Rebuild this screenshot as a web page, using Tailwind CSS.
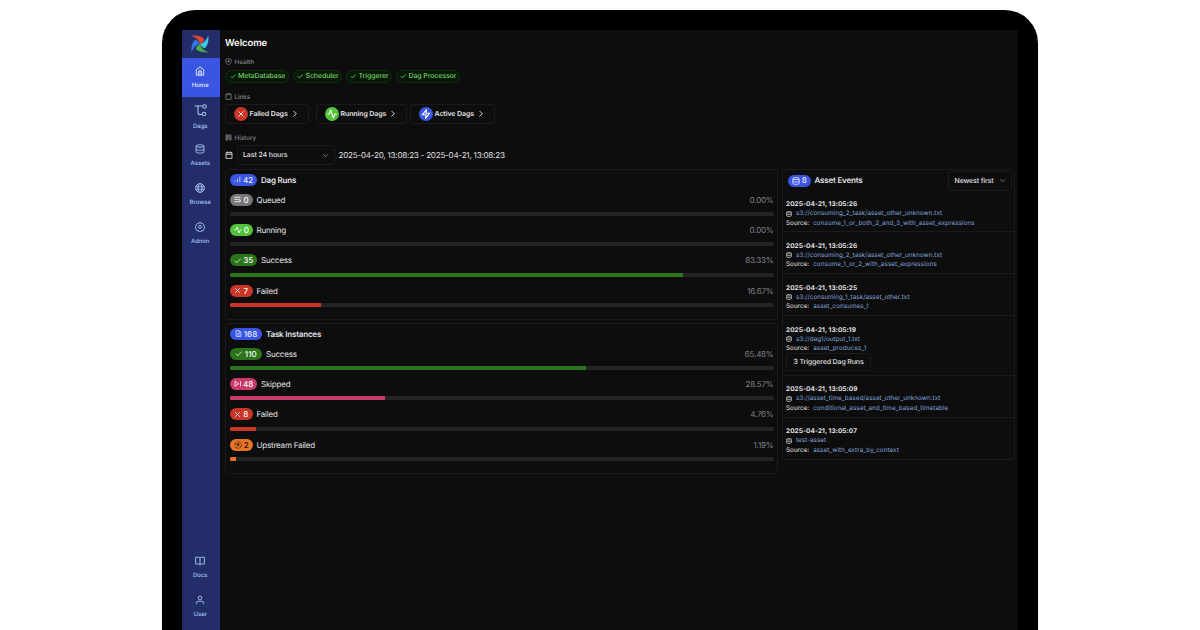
<!DOCTYPE html>
<html lang="en">
<head>
<meta charset="utf-8">
<title>Airflow</title>
<script src="https://cdn.jsdelivr.net/npm/@tailwindcss/browser@4"></script>
</head>
<body class="bg-white w-[1200px] h-[630px] overflow-hidden font-['Inter',sans-serif] [text-rendering:geometricPrecision]">
<svg class="hidden" xmlns="http://www.w3.org/2000/svg">
  <symbol id="check" viewBox="0 0 24 24"><path d="M22 5 9 18l-6-6"/></symbol>
  <symbol id="x" viewBox="0 0 24 24"><path d="M20 4 4 20M4 4l16 16"/></symbol>
  <symbol id="right" viewBox="0 0 24 24"><path d="m8 3 9 9-9 9"/></symbol>
  <symbol id="down" viewBox="0 0 24 24"><path d="m4 8 8 8 8-8"/></symbol>
  <symbol id="pulse" viewBox="0 0 24 24"><path d="M23 12h-4l-4 9L9 3l-4 9H1"/></symbol>
  <symbol id="zap" viewBox="0 0 24 24"><path d="M13 2 3 14h9l-1 8 10-12h-9z"/></symbol>
  <symbol id="db" viewBox="0 0 24 24"><ellipse cx="12" cy="5" rx="9.500" ry="3"/><path d="M2.500 5v14c0 1.700 4 3 9.500 3s9.500-1.300 9.500-3V5M2.500 12c0 1.700 4 3 9.500 3s9.500-1.300 9.500-3"/></symbol>
  <symbol id="bars" viewBox="0 0 24 24"><path d="M20 21V2M12 21V9M4 21v-5"/></symbol>
  <symbol id="queue" viewBox="0 0 24 24"><path d="M1 4h20M1 11h12M1 18h12M16 10v10l7-5z"/></symbol>
  <symbol id="file" viewBox="0 0 24 24"><path d="M14 2H4v20h16V8zM14 2v6h6M8 13h8M8 17h8"/></symbol>
  <symbol id="skip" viewBox="0 0 24 24"><path d="M3 4v16l12-8zM21 4v16"/></symbol>
  <symbol id="up" viewBox="0 0 24 24"><circle cx="12" cy="12" r="10" stroke-dasharray="11 4"/><path d="M12 18V7M8 11l4-4 4 4z"/></symbol>
  <symbol id="clip" viewBox="0 0 24 24"><path d="M8 4H3v18h18V4h-5M8 2h8v4H8z"/></symbol>
  <symbol id="shield" viewBox="0 0 24 24"><path d="M12 2 3 5v8c0 5 4 8 9 10 5-2 9-5 9-10V5z"/><path d="M12 7v9M7.500 11.500h9"/></symbol>
  <symbol id="hist" viewBox="0 0 24 24"><path d="M3 3h10v6H3zM3 13h7v8H3zM16 3h5v18h-5zM12 13h9M7 3v18"/></symbol>
  <symbol id="cal" viewBox="0 0 24 24"><path d="M3 5h18v17H3zM3 10h18M8 1v6M16 1v6"/></symbol>
</svg>

<div class="ml-[162px] mt-[10px] w-[876px] h-[620px] bg-black rounded-t-[33px] px-5 pt-5">
<div class="flex w-[836px] h-[600px] bg-[#0d0d0d] overflow-hidden text-[#e4e4e7]">

  <nav class="flex flex-col shrink-0 w-[37.500px] h-[600px] pr-[1px] bg-[#222d69] text-[#a6c3f5] text-[6px] leading-[8px] font-medium">
    <div class="h-7 flex items-center justify-center">
      <svg class="size-[18px]" viewBox="0 0 54 54">
        <path fill="#e4452c" d="M1 2C16 0 33 4 38 11c3 5 0 9-11 16C25 16 15 7 1 2z"/>
        <path fill="#44c4dc" d="M52 1C54 16 50 33 43 38c-5 3-9 0-16-11C38 25 47 15 52 1z"/>
        <path fill="#42b047" d="M53 52C38 54 21 50 16 43c-3-5 0-9 11-16 2 11 12 20 26 25z"/>
        <path fill="#3474e8" d="M1 53C0 38 4 21 11 16c5-3 9 0 16 11C16 29 6 39 1 53z"/>
      </svg>
    </div>
    <div class="h-[39px] -mr-[1px] pr-[1px] bg-[#3b55e3] text-[#e5ebff] flex flex-col items-center pt-2">
      <svg class="size-[10px]" viewBox="0 0 24 24" fill="none" stroke="currentColor" stroke-width="2.200"><path d="m3 9 9-7 9 7v13H3zM8 22v-7a4 4 0 0 1 8 0v7M12 12v10"/></svg>
      <span class="mt-[5.500px]">Home</span>
    </div>
    <div class="h-[41px] flex flex-col items-center pt-[7px]">
      <svg class="size-[13px]" viewBox="0 0 26 26" fill="none" stroke="currentColor" stroke-width="2.200"><path d="M1 4h17M8 4v13q0 4 4 4h4"/><circle cx="21" cy="5" r="3.500"/><circle cx="20" cy="20" r="3.500"/></svg>
      <span class="mt-[5.500px]">Dags</span>
    </div>
    <div class="h-[39px] flex flex-col items-center pt-[6px]">
      <svg class="size-[10px]" fill="none" stroke="currentColor" stroke-width="2.200"><use href="#db"/></svg>
      <span class="mt-[5.500px]">Assets</span>
    </div>
    <div class="h-[39px] flex flex-col items-center pt-[6px]">
      <svg class="size-[10px]" viewBox="0 0 24 24" fill="none" stroke="currentColor" stroke-width="2.200"><circle cx="12" cy="12" r="10.500"/><ellipse cx="12" cy="12" rx="4.800" ry="10.500"/><path d="M2 9h20M2 15h20"/></svg>
      <span class="mt-[5.500px]">Browse</span>
    </div>
    <div class="h-[39px] flex flex-col items-center pt-[6px]">
      <svg class="size-[10px]" viewBox="0 0 24 24" fill="none" stroke="currentColor" stroke-width="2.200"><path d="m9.500 1.500h5l1 3 3-1 3 3-1 3 2.500 1v4l-2.500 1 1 3-3 3-3-1-1 3h-5l-1-3-3 1-3-3 1-3-2.500-1v-4l2.500-1-1-3 3-3 3 1z"/><circle cx="12" cy="12" r="3.500"/></svg>
      <span class="mt-[5.500px]">Admin</span>
    </div>
    <div class="grow"></div>
    <div class="h-[39px] flex flex-col items-center">
      <svg class="size-[10px]" viewBox="0 0 24 24" fill="none" stroke="currentColor" stroke-width="2.200"><path d="M1.500 3H9q3 0 3 3 0-3 3-3h7.500v16H15q-3 0-3 3 0-3-3-3H1.500zM12 6v15"/></svg>
      <span class="mt-[5.500px]">Docs</span>
    </div>
    <div class="h-[35px] flex flex-col items-center">
      <svg class="size-[10px]" viewBox="0 0 24 24" fill="none" stroke="currentColor" stroke-width="2.200"><circle cx="12" cy="7" r="4.500"/><path d="M3 22v-2q0-5 5-5h8q5 0 5 5v2"/></svg>
      <span class="mt-[5.500px]">User</span>
    </div>
  </nav>

  <main class="grow pl-[5.500px] pr-[4px] pt-[8px] tracking-[-0.100px]">
    <h1 class="text-[9.500px] leading-[12px] font-semibold text-[#fafafa]">Welcome</h1>
    <div class="mt-[7px] h-[10px] pt-px flex items-center gap-[2.500px] text-[6.250px] font-medium tracking-normal text-[#85858c]">
      <svg class="size-[7px] mb-[2px]" fill="none" stroke="currentColor" stroke-width="2.500"><use href="#shield"/></svg>Health
    </div>
    <div class="mt-[2.500px] flex gap-[4px] text-[7px] font-medium text-[#75d067]">
      <div class="w-[64px] h-[13.500px] flex items-center gap-[2px] pl-[3.500px] rounded-full border border-[#103010] bg-[#081807]"><svg class="size-[6.500px]" fill="none" stroke="currentColor" stroke-width="3"><use href="#check"/></svg>MetaDatabase</div>
      <div class="w-[49px] h-[13.500px] flex items-center gap-[2px] pl-[3px] rounded-full border border-[#103010] bg-[#081807]"><svg class="size-[6.500px]" fill="none" stroke="currentColor" stroke-width="3"><use href="#check"/></svg>Scheduler</div>
      <div class="w-[46px] h-[13.500px] flex items-center gap-[2px] pl-[3px] rounded-full border border-[#103010] bg-[#081807]"><svg class="size-[6.500px]" fill="none" stroke="currentColor" stroke-width="3"><use href="#check"/></svg>Triggerer</div>
      <div class="w-[64px] h-[13.500px] flex items-center gap-[2px] pl-[3px] rounded-full border border-[#103010] bg-[#081807]"><svg class="size-[6.500px]" fill="none" stroke="currentColor" stroke-width="3"><use href="#check"/></svg>Dag Processor</div>
    </div>
    <div class="mt-[9px] h-[10px] pt-px flex items-center gap-[2.500px] text-[6.250px] font-medium tracking-normal text-[#85858c]">
      <svg class="size-[7px] mb-[2px]" fill="none" stroke="currentColor" stroke-width="2.500"><use href="#clip"/></svg>Links
    </div>
    <div class="mt-[2px] flex gap-[7px] text-[7px] font-semibold">
      <div class="w-[84px] h-5 flex items-center gap-[2px] pl-[7.500px] rounded-[2.500px] border border-[#1b1b1d]"><span class="size-[14px] rounded-full bg-[#c93627] text-white flex items-center justify-center"><svg class="size-[8px]" fill="none" stroke="currentColor" stroke-width="2.500"><use href="#x"/></svg></span>Failed Dags<svg class="size-[7.500px] ml-[1px]" fill="none" stroke="currentColor" stroke-width="3"><use href="#right"/></svg></div>
      <div class="w-[91px] h-5 flex items-center gap-[2px] pl-[7.500px] rounded-[2.500px] border border-[#1b1b1d]"><span class="size-[14px] rounded-full bg-[#52c33a] text-white flex items-center justify-center"><svg class="size-[10px]" fill="none" stroke="currentColor" stroke-width="2.500"><use href="#pulse"/></svg></span>Running Dags<svg class="size-[7.500px] ml-[1px]" fill="none" stroke="currentColor" stroke-width="3"><use href="#right"/></svg></div>
      <div class="w-[85px] -ml-[4px] h-5 flex items-center gap-[2px] pl-[7.500px] rounded-[2.500px] border border-[#1b1b1d]"><span class="size-[14px] rounded-full bg-[#3b55e3] text-white flex items-center justify-center"><svg class="size-[10px]" fill="none" stroke="currentColor" stroke-width="2.500"><use href="#zap"/></svg></span>Active Dags<svg class="size-[7.500px] ml-[1px]" fill="none" stroke="currentColor" stroke-width="3"><use href="#right"/></svg></div>
    </div>
    <div class="mt-[9px] h-[10px] pt-px flex items-center gap-[2.500px] text-[6.250px] font-medium tracking-normal text-[#85858c]">
      <svg class="size-[7px] mb-[2px]" fill="none" stroke="currentColor" stroke-width="2.500"><use href="#hist"/></svg>History
    </div>
    <div class="mt-[2px] h-5 flex items-center">
      <svg class="size-[8px]" fill="none" stroke="currentColor" stroke-width="2.500"><use href="#cal"/></svg>
      <div class="ml-[3.500px] w-[98px] h-5 flex items-center justify-between pl-[5.500px] pr-[5px] rounded-[2.500px] border border-[#1b1b1d] text-[7px] font-medium">Last 24 hours<svg class="size-[7px] text-[#a1a1aa]" fill="none" stroke="currentColor" stroke-width="2.500"><use href="#down"/></svg></div>
      <span class="ml-[4px] text-[8px] tracking-[-0.190px]">2025-04-20, 13:08:23 - 2025-04-21, 13:08:23</span>
    </div>

    <div class="mt-[3.500px] flex gap-[4px] items-start">
      <div class="w-[553px] flex flex-col gap-[3px] tracking-[-0.200px]">
        <section class="h-[151px] border border-[#1b1b1d] rounded-[2.500px] pl-[4px] pr-[3.500px] pt-[4px] text-[8px]">
          <div class="h-[12px] flex items-center gap-[4px] font-semibold"><span class="h-[12px] w-[27px] rounded-full bg-[#3b55e3] text-[#e5ebff] font-medium tracking-normal flex items-center justify-center gap-[2px]"><svg class="size-[7px]" fill="none" stroke="currentColor" stroke-width="2.500"><use href="#bars"/></svg>42</span>Dag Runs</div>
          <div class="mt-[8px] h-[30.300px]"><div class="h-[12.500px] flex items-center"><span class="h-[12px] w-[22.500px] rounded-full bg-[#77777a] text-white font-medium tracking-normal flex items-center justify-center gap-[2px] mr-[4px]"><svg class="size-[7.500px]" fill="none" stroke="currentColor" stroke-width="2.500"><use href="#queue"/></svg>0</span>Queued<span class="ml-auto text-[#85858c]">0.00%</span></div><div class="mt-[6px] h-[4px] rounded-[1.500px] bg-[#242426] overflow-hidden"></div></div>
          <div class="h-[30.300px]"><div class="h-[12.500px] flex items-center"><span class="h-[12px] w-[22.500px] rounded-full bg-[#52c33a] text-white font-medium tracking-normal flex items-center justify-center gap-[2px] mr-[4px]"><svg class="size-[8px]" fill="none" stroke="currentColor" stroke-width="2.500"><use href="#pulse"/></svg>0</span>Running<span class="ml-auto text-[#85858c]">0.00%</span></div><div class="mt-[6px] h-[4px] rounded-[1.500px] bg-[#242426] overflow-hidden"></div></div>
          <div class="h-[30.300px]"><div class="h-[12.500px] flex items-center"><span class="h-[12px] w-[27px] rounded-full bg-[#2a7519] text-white font-medium tracking-normal flex items-center justify-center gap-[2px] mr-[4px]"><svg class="size-[7.500px]" fill="none" stroke="currentColor" stroke-width="2.500"><use href="#check"/></svg>35</span>Success<span class="ml-auto text-[#85858c]">83.33%</span></div><div class="mt-[6px] h-[4px] rounded-[1.500px] bg-[#242426] overflow-hidden"><div class="h-full bg-[#2a7519]" style="width:83.33%"></div></div></div>
          <div class="h-[30.300px]"><div class="h-[12.500px] flex items-center"><span class="h-[12px] w-[22.500px] rounded-full bg-[#c93627] text-white font-medium tracking-normal flex items-center justify-center gap-[2px] mr-[4px]"><svg class="size-[7px]" fill="none" stroke="currentColor" stroke-width="2.500"><use href="#x"/></svg>7</span>Failed<span class="ml-auto text-[#85858c]">16.67%</span></div><div class="mt-[6px] h-[4px] rounded-[1.500px] bg-[#242426] overflow-hidden"><div class="h-full bg-[#c93627]" style="width:16.67%"></div></div></div>
        </section>
        <section class="h-[151px] border border-[#1b1b1d] rounded-[2.500px] pl-[4px] pr-[3.500px] pt-[4px] text-[8px]">
          <div class="h-[12px] flex items-center gap-[4px] font-semibold"><span class="h-[12px] w-[32px] rounded-full bg-[#3b55e3] text-[#e5ebff] font-medium tracking-normal flex items-center justify-center gap-[2px]"><svg class="size-[7px]" fill="none" stroke="currentColor" stroke-width="2.500"><use href="#file"/></svg>168</span>Task Instances</div>
          <div class="mt-[8px] h-[30.300px]"><div class="h-[12.500px] flex items-center"><span class="h-[12px] w-[32px] rounded-full bg-[#2a7519] text-white font-medium tracking-normal flex items-center justify-center gap-[2px] mr-[4px]"><svg class="size-[7.500px]" fill="none" stroke="currentColor" stroke-width="2.500"><use href="#check"/></svg>110</span>Success<span class="ml-auto text-[#85858c]">65.48%</span></div><div class="mt-[6px] h-[4px] rounded-[1.500px] bg-[#242426] overflow-hidden"><div class="h-full bg-[#2a7519]" style="width:65.48%"></div></div></div>
          <div class="h-[30.300px]"><div class="h-[12.500px] flex items-center"><span class="h-[12px] w-[27px] rounded-full bg-[#cb3a6d] text-white font-medium tracking-normal flex items-center justify-center gap-[2px] mr-[4px]"><svg class="size-[7.500px]" fill="none" stroke="currentColor" stroke-width="2.500"><use href="#skip"/></svg>48</span>Skipped<span class="ml-auto text-[#85858c]">28.57%</span></div><div class="mt-[6px] h-[4px] rounded-[1.500px] bg-[#242426] overflow-hidden"><div class="h-full bg-[#cb3a6d]" style="width:28.57%"></div></div></div>
          <div class="h-[30.300px]"><div class="h-[12.500px] flex items-center"><span class="h-[12px] w-[22.500px] rounded-full bg-[#c93627] text-white font-medium tracking-normal flex items-center justify-center gap-[2px] mr-[4px]"><svg class="size-[7px]" fill="none" stroke="currentColor" stroke-width="2.500"><use href="#x"/></svg>8</span>Failed<span class="ml-auto text-[#85858c]">4.76%</span></div><div class="mt-[6px] h-[4px] rounded-[1.500px] bg-[#242426] overflow-hidden"><div class="h-full bg-[#c93627]" style="width:4.76%"></div></div></div>
          <div class="h-[30.300px]"><div class="h-[12.500px] flex items-center"><span class="h-[12px] w-[22.500px] rounded-full bg-[#e97428] text-[#241005] font-medium tracking-normal flex items-center justify-center gap-[2px] mr-[4px]"><svg class="size-[8px]" fill="none" stroke="currentColor" stroke-width="2.200"><use href="#up"/></svg>2</span>Upstream Failed<span class="ml-auto text-[#85858c]">1.19%</span></div><div class="mt-[6px] h-[4px] rounded-[1.500px] bg-[#242426] overflow-hidden"><div class="h-full bg-[#e97428]" style="width:1.19%"></div></div></div>
        </section>
      </div>

      <section class="w-[233px] border border-[#1b1b1d] rounded-[2.500px] text-[6.250px] leading-[9.300px] tracking-[0.060px]">
        <div class="h-[20.500px] mt-[1px] flex items-center pl-[5px] pr-[2px] text-[8px] font-semibold tracking-[-0.200px]"><span class="h-[12px] w-[22.500px] rounded-full bg-[#3b55e3] text-[#e5ebff] font-medium tracking-normal flex items-center justify-center gap-[2px] mr-[4px]"><svg class="size-[8px]" fill="none" stroke="currentColor" stroke-width="2.500"><use href="#db"/></svg>8</span>Asset Events
          <div class="ml-auto w-[64px] h-5 flex items-center justify-between pl-[5.500px] pr-[5px] rounded-[2.500px] border border-[#1b1b1d] text-[7px] font-medium tracking-[-0.120px]">Newest first<svg class="size-[7px] text-[#a1a1aa]" fill="none" stroke="currentColor" stroke-width="2.500"><use href="#down"/></svg></div>
        </div>
        <div class="h-[40.500px] pt-[9px] pl-[3px] border-b border-[#1b1b1d]">
          <div class="font-bold text-[6.500px]">2025-04-21, 13:05:26</div>
          <div class="flex items-center gap-[4px] text-[#82a5dc]"><svg class="size-[6px] text-[#d4d4d8]" fill="none" stroke="currentColor" stroke-width="2.800"><use href="#db"/></svg>s3://consuming_2_task/asset_other_unknown.txt</div>
          <div class="flex gap-[4px]">Source:<span class="text-[#82a5dc] tracking-[0.110px]">consume_1_or_both_2_and_3_with_asset_expressions</span></div>
        </div>
        <div class="h-[42px] pt-[10px] pl-[3px] border-b border-[#1b1b1d]">
          <div class="font-bold text-[6.500px]">2025-04-21, 13:05:26</div>
          <div class="flex items-center gap-[4px] text-[#82a5dc]"><svg class="size-[6px] text-[#d4d4d8]" fill="none" stroke="currentColor" stroke-width="2.800"><use href="#db"/></svg>s3://consuming_2_task/asset_other_unknown.txt</div>
          <div class="flex gap-[4px]">Source:<span class="text-[#82a5dc] tracking-[0.110px]">consume_1_or_2_with_asset_expressions</span></div>
        </div>
        <div class="h-[42px] pt-[10px] pl-[3px] border-b border-[#1b1b1d]">
          <div class="font-bold text-[6.500px]">2025-04-21, 13:05:25</div>
          <div class="flex items-center gap-[4px] text-[#82a5dc]"><svg class="size-[6px] text-[#d4d4d8]" fill="none" stroke="currentColor" stroke-width="2.800"><use href="#db"/></svg>s3://consuming_1_task/asset_other.txt</div>
          <div class="flex gap-[4px]">Source:<span class="text-[#82a5dc] tracking-[0.110px]">asset_consumes_1</span></div>
        </div>
        <div class="h-[60px] pt-[10px] pl-[3px] border-b border-[#1b1b1d]">
          <div class="font-bold text-[6.500px]">2025-04-21, 13:05:19</div>
          <div class="flex items-center gap-[4px] text-[#82a5dc]"><svg class="size-[6px] text-[#d4d4d8]" fill="none" stroke="currentColor" stroke-width="2.800"><use href="#db"/></svg>s3://dag1/output_1.txt</div>
          <div class="flex gap-[4px]">Source:<span class="text-[#82a5dc] tracking-[0.110px]">asset_produces_1</span></div>
          <div class="w-[85px] h-[18px] -mt-[0.500px] flex items-center justify-center rounded-[2.500px] border border-[#1b1b1d] text-[7px] font-medium tracking-[-0.120px]">3 Triggered Dag Runs</div>
        </div>
        <div class="h-[42px] pt-[9.500px] pl-[3px] border-b border-[#1b1b1d]">
          <div class="font-bold text-[6.500px]">2025-04-21, 13:05:09</div>
          <div class="flex items-center gap-[4px] text-[#82a5dc]"><svg class="size-[6px] text-[#d4d4d8]" fill="none" stroke="currentColor" stroke-width="2.800"><use href="#db"/></svg>s3://asset_time_based/asset_other_unknown.txt</div>
          <div class="flex gap-[4px]">Source:<span class="text-[#82a5dc] tracking-[0.080px]">conditional_asset_and_time_based_timetable</span></div>
        </div>
        <div class="h-[41px] pt-[9.500px] pl-[3px]">
          <div class="font-bold text-[6.500px]">2025-04-21, 13:05:07</div>
          <div class="flex items-center gap-[4px] text-[#82a5dc]"><svg class="size-[6px] text-[#d4d4d8]" fill="none" stroke="currentColor" stroke-width="2.800"><use href="#db"/></svg>test-asset</div>
          <div class="flex gap-[4px]">Source:<span class="text-[#82a5dc] tracking-[0.080px]">asset_with_extra_by_context</span></div>
        </div>
      </section>
    </div>
  </main>
</div>
</div>
</body>
</html>
